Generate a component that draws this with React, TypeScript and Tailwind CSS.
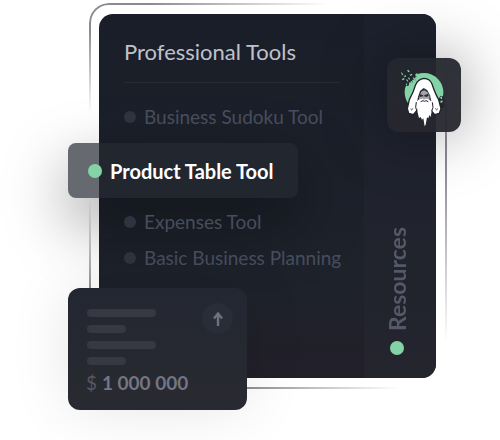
import clsx from "clsx";

interface ToolItem {
  label: string;
  active?: boolean;
}

const tools: ToolItem[] = [
  { label: "Business Sudoku Tool" },
  { label: "Product Table Tool", active: true },
  { label: "Expenses Tool" },
  { label: "Basic Business Planning" },
];

const summaryLines = ["w-[69px]", "w-[39px]", "w-[69px]", "w-[39px]"];

function WizardLogo() {
  return (
    <svg viewBox="9 12 222 222" className="h-full w-full" aria-hidden="true">
      <circle cx="120" cy="115" r="58" fill="#84d3a6" />
      <path
        d="M58 84 78 62 92 58 99 68 91 72 95 79 84 77 87 86 76 85 74 95 62 96Z"
        fill="#23252e"
      />
      <path d="M170 125 180 128 181 160 169 164 161 139Z" fill="#23252e" />
      <path
        d="m51 54 4 3 3 7-4-1zM69 49l5-1 3 5-4 2zM60 66l5-3 1 5-4 2zM53 76l6-4 3 3-5 4zM66 76l5 1 2 6-4-1zM77 62l7-3 1 4-6 3zM86 69l5 3 4 9-6-4zM94 60l7-3-2 10-4 2zM73 70l4 2 1 5-5-2zM80 81l5 1 1 5-5-1zM65 90l5-2-2 7zM168 130l5-3 2 7-4 2zM169 141l6-2 1 6-6 2z"
        fill="#84d3a6"
      />
      <path
        d="M120 73c-14 2-21 8-25 19-5 18-12 32-19 45l-6 27 4 14 14 4 12-14 6-20h28l6 20 12 14 14-4 5-14-7-27c-10-17-15-32-20-47-4-11-12-16-24-17Z"
        fill="#fff"
        stroke="#202229"
        strokeWidth="4"
        strokeLinejoin="round"
      />
      <path
        d="m119 102-11 9-6 18-3 14 7 3 32-1 4-4-4-17-8-15Z"
        fill="#272931"
      />
      <path d="m108 121 5-9 8-3 9 5 6 10 1 16-9-2-17 1-8 3Z" fill="#a4a5aa" />
      <path
        d="m106 120 10 3 3 4 3-4 11-4 1 6-6 4-7-2h-5l-7 2-3-4Z"
        fill="#292b33"
      />
      <path
        d="M98 143c4-7 12-8 18-9l4 3 5-3c7 1 15 3 18 10v28l-3 17-4-6-3 10-4-3-4 22-3 5-4-24-4 4-4-8-5 3-5-20Z"
        fill="#fff"
      />
      <path
        d="m110 143 7-3 4 2 5-2 7 3"
        fill="none"
        stroke="#292b33"
        strokeWidth="3"
      />
      <path
        d="m97 144-2 16 4 12M145 145l2 15-4 12"
        fill="none"
        stroke="#202229"
        strokeWidth="3"
      />
      <path
        d="m80 163 3 6 4-7M154 162l4 7 3-6"
        fill="none"
        stroke="#494b51"
        strokeWidth="2"
      />
    </svg>
  );
}

function ToolRow({ label, active }: ToolItem) {
  return (
    <li
      className={clsx(
        "flex items-center gap-2 whitespace-nowrap leading-7",
        active
          ? "-ml-14 mt-3 mb-[10px] h-[55px] w-[230px] rounded-lg bg-[#252932]/70 pl-5 text-[20px] font-bold text-white shadow-[0_24px_64px_rgba(0,0,0,0.4)]"
          : "mt-2 text-[19px] text-[#474d5d]"
      )}
    >
      <span
        className={clsx(
          "shrink-0 rounded-full",
          active ? "size-[14px] bg-[#84d3a6]" : "size-3 bg-[#2e333f]"
        )}
      />
      {label}
    </li>
  );
}

function BalanceCard() {
  return (
    <div className="relative -mb-8 -ml-14 mt-4 h-[122px] w-[179px] rounded-xl bg-linear-to-b from-[#232731] to-[#292a31] pl-[18px] pt-[21px] shadow-[0_0_60px_rgba(0,0,0,0.1)]">
      <div className="flex flex-col gap-2 pl-px">
        {summaryLines.map((width, index) => (
          <span
            key={index}
            className={clsx("h-2 rounded-full bg-[#363842]", width)}
          />
        ))}
      </div>
      <p className="mt-1 text-[19px] leading-7 text-[#565863]">
        $ <span className="font-bold text-[#747683]">1 000 000</span>
      </p>
      <span className="absolute right-[14px] top-[15px] flex size-[31px] items-center justify-center rounded-full bg-[#282d38]">
        <svg
          viewBox="0 0 10 14"
          className="h-[14px] w-[10px]"
          fill="none"
          stroke="#6d7280"
          strokeWidth="2.4"
          aria-hidden="true"
        >
          <path d="M5 14V1.5M1 6.5l4-5 4 5" />
        </svg>
      </span>
    </div>
  );
}

export default function App() {
  return (
    <main className="overflow-hidden bg-white pb-[62px] pl-[99px] pr-16 pt-[14px] font-['Lato',sans-serif]">
      <section className="relative flex rounded-[14px] bg-linear-to-b from-[#1a1e28] via-[#1e222b] via-75% to-[#221f29]">
        {/* faded outline around the panel */}
        <div className="pointer-events-none absolute -inset-x-[10px] -bottom-[11px] -top-[11px] -mr-px rounded-[20px] border-2 border-[#8c8a92] [mask:radial-gradient(240px_110px_at_0_0,#000_25%,transparent)_no-repeat,radial-gradient(310px_190px_at_0_100%,#000_50%,transparent)_no-repeat,linear-gradient(transparent,#000_30%,#000_40%,transparent)_right_50px/6px_290px_no-repeat]" />

        <div className="relative min-w-0 flex-1 pl-[25px] pr-6 pt-6">
          <h1 className="border-b border-[#262a34] pb-4 text-[22px] leading-7 text-[#bfc2cc]">
            Professional Tools
          </h1>
          <ul className="pt-3">
            {tools.map((tool) => (
              <ToolRow key={tool.label} {...tool} />
            ))}
          </ul>
          <BalanceCard />
        </div>

        <aside className="relative flex w-[72px] flex-col justify-between rounded-r-[14px] bg-linear-to-b from-[#1c212d] to-[#24252d] pb-[23px] pt-11">
          <div className="-mr-[25px] ml-[23px] h-[74px] rounded-xl bg-linear-to-b from-[#24272f]/95 to-[#27262e]/95 shadow-[0_0_64px_rgba(0,0,0,0.4)]">
            <WizardLogo />
          </div>
          <div className="flex w-[66px] flex-col items-center gap-[10px]">
            <span className="rotate-180 text-[23px] font-bold leading-7 text-[#555866] [writing-mode:vertical-rl]">
              Resources
            </span>
            <span className="size-[14px] rounded-full bg-[#84d3a6]" />
          </div>
        </aside>
      </section>
    </main>
  );
}
